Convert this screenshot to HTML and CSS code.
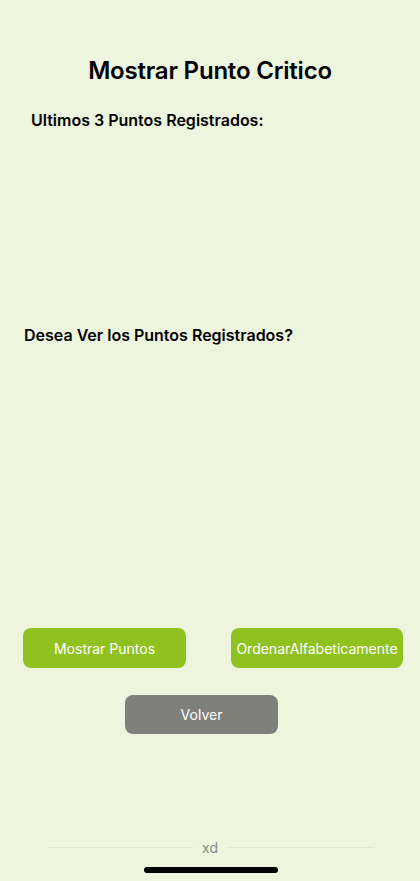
FILE: index.html
```html
<!DOCTYPE html>
<html lang="es">
<head>
<meta charset="utf-8">
<title>Mostrar Punto Critico</title>
<link rel="stylesheet" href="styles.css">
</head>
<body>
<div class="screen">
  <h1 class="title">Mostrar Punto Critico</h1>
  <h2 class="subtitle">Ultimos 3 Puntos Registrados:</h2>
  <h2 class="question">Desea Ver los Puntos Registrados?</h2>
  <div class="actions">
    <button class="btn btn-green btn-show">Mostrar Puntos</button>
    <button class="btn btn-green btn-sort">OrdenarAlfabeticamente</button>
  </div>
  <button class="btn btn-gray btn-back">Volver</button>
  <div class="footer">
    <span class="rule rule-left"></span>
    <span class="footer-text">xd</span>
    <span class="rule rule-right"></span>
  </div>
  <div class="home-indicator"></div>
</div>
</body>
</html>
```

FILE: styles.css
```css
* { box-sizing: border-box; }
html, body {
  margin: 0;
  padding: 0;
  background: #edf5df;
}
body {
  font-family: Inter, "Noto Sans", sans-serif;
  color: #000;
}
.screen {
  width: 420px;
  height: 881px;
  padding-top: 56px;
  display: flex;
  flex-direction: column;
  overflow: hidden;
}
.title {
  margin: 0;
  font-size: 24px;
  line-height: 30px;
  font-weight: 600;
  letter-spacing: -0.2px;
  text-align: center;
}
.subtitle {
  margin: 24px 0 0 31px;
  font-size: 16px;
  line-height: 20px;
  font-weight: 600;
}
.question {
  margin: 195px 0 0 24px;
  font-size: 16px;
  line-height: 20px;
  font-weight: 600;
}
.actions {
  display: flex;
  gap: 45px;
  margin: 283px 0 0 23px;
}
.btn {
  border: none;
  border-radius: 8px;
  color: #fff;
  font-family: Inter, "Noto Sans", sans-serif;
  font-size: 14px;
  font-weight: 400;
  padding: 0;
  display: flex;
  align-items: center;
  justify-content: center;
}
.btn-green { background: #8fc21f; height: 40px; }
.btn-show { width: 163px; }
.btn-sort { width: 172px; }
.btn-gray {
  background: #7f807a;
}
.btn-back {
  width: 153px;
  height: 39px;
  margin: 27px 0 0 125px;
}
.footer {
  display: flex;
  align-items: center;
  margin: 105px 0 0 48px;
  width: 326px;
  height: 17px;
}
.rule {
  height: 1px;
  background: #e2e6da;
}
.rule-left { width: 145px; }
.rule-right { width: 147px; }
.footer-text {
  width: 34px;
  text-align: center;
  font-size: 14px;
  line-height: 17px;
  color: #8a8a86;
}
.home-indicator {
  width: 134px;
  height: 6px;
  border-radius: 3px;
  background: #000;
  margin: 11px 0 0 144px;
}
```
